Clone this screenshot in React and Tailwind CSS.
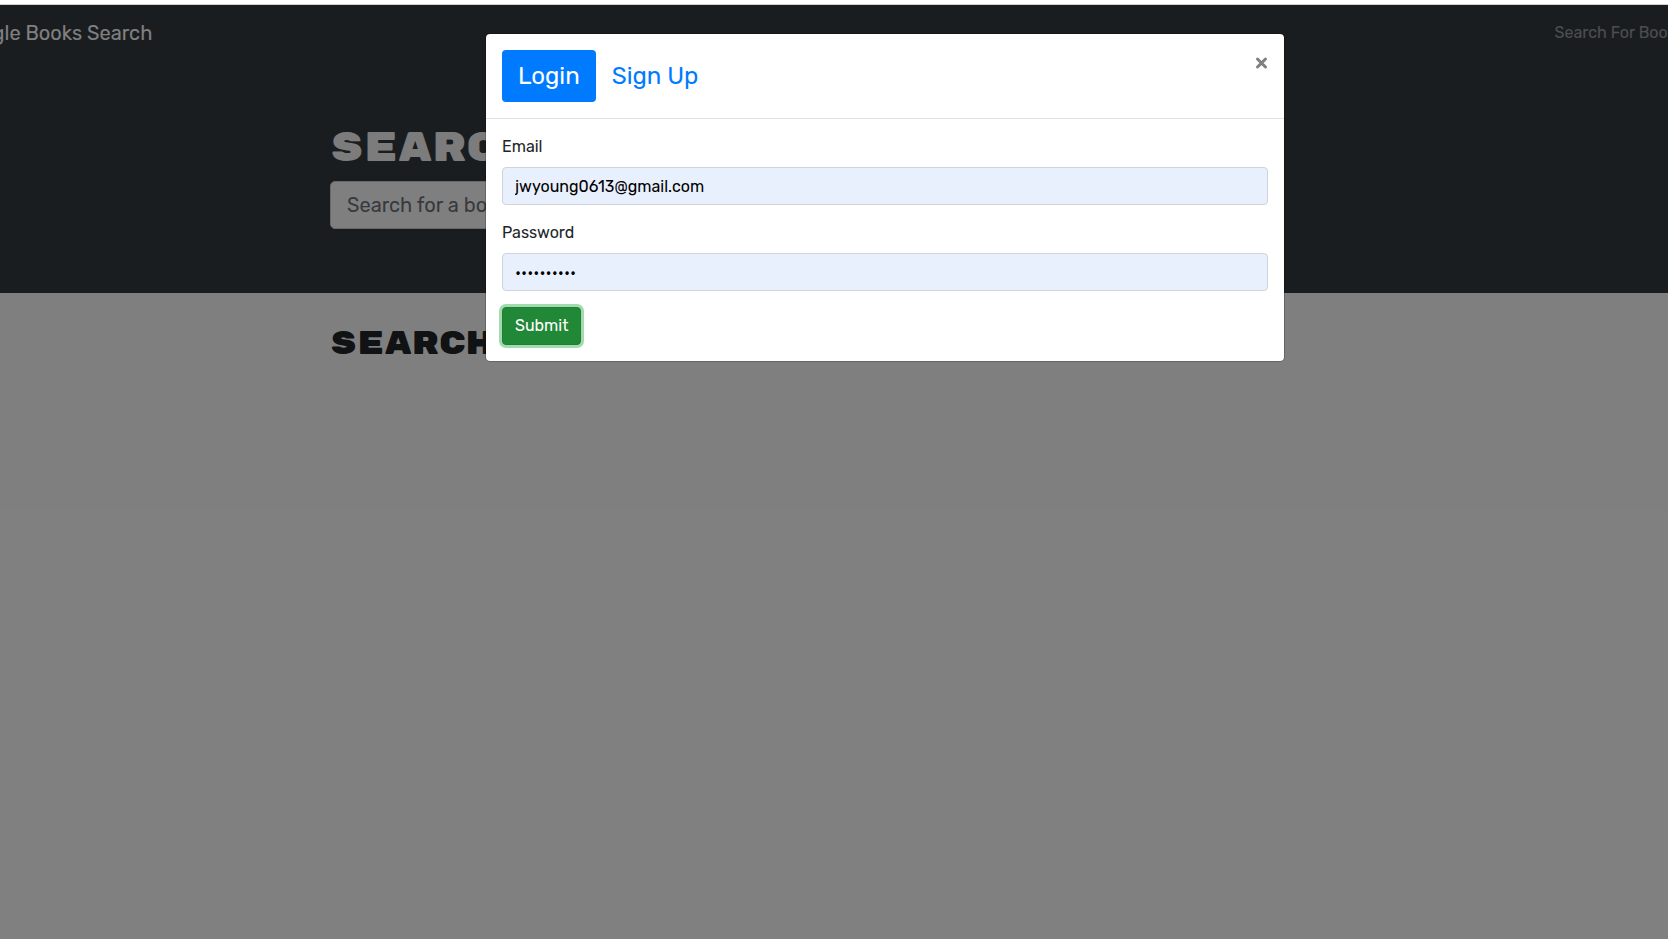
import { useState } from "react";

function Field({ id, label, type, value, onChange }) {
  return (
    <div className="mb-4 flex flex-col gap-2">
      <label htmlFor={id} className="self-start text-[#212529]">
        {label}
      </label>
      <input
        id={id}
        type={type}
        value={value}
        onChange={(e) => onChange(e.target.value)}
        className="h-[38px] w-full rounded border border-[#ced4da] bg-[#e8f0fe] px-3 text-black outline-none"
      />
    </div>
  );
}

function LoginModal() {
  const [email, setEmail] = useState("jwyoung0613@gmail.com");
  const [password, setPassword] = useState("password12");

  return (
    <div
      role="dialog"
      aria-modal="true"
      aria-label="Login"
      className="w-full max-w-[800px] rounded-[5px] border border-black/20 bg-white bg-clip-padding"
    >
      <div className="flex items-start justify-between border-b border-[#dee2e6] p-4">
        <div className="flex text-2xl leading-9">
          <button type="button" className="rounded bg-[#007bff] px-4 py-2 text-white">
            Login
          </button>
          <button type="button" className="rounded px-4 py-2 text-[#007bff]">
            Sign Up
          </button>
        </div>
        <button type="button" aria-label="Close" className="flex size-6 items-center justify-end pt-0.5 text-[#7f7f7f]">
          <svg viewBox="0 0 14 14" className="size-[14px]" fill="none" stroke="currentColor" strokeWidth="3" strokeLinecap="round">
            <path d="M3.5 3 L11.5 11 M11.5 3 L3.5 11" />
          </svg>
        </button>
      </div>
      <form className="p-4" onSubmit={(e) => e.preventDefault()}>
        <Field id="email" label="Email" type="email" value={email} onChange={setEmail} />
        <Field id="password" label="Password" type="password" value={password} onChange={setPassword} />
        <button
          type="submit"
          className="block h-[38px] rounded border border-[#1e7e34] bg-[#218838] px-3 text-white ring-3 ring-[#a1dbae]"
        >
          Submit
        </button>
      </form>
    </div>
  );
}

export default function App() {
  return (
    <div className="flex min-h-screen flex-col bg-white font-[Rubik,Inter,sans-serif] text-base">
      <div className="h-[5px] border-b border-[#d0d0d0] bg-white" />
      <div className="relative flex-1 overflow-hidden">
        <div className="-mr-[177px] -ml-[75px]">
          <nav className="flex h-14 items-center justify-between bg-[#343a40] pr-[161px] pl-[31px]">
            <a href="#home" className="text-xl whitespace-nowrap text-white">
              Google Books Search
            </a>
            <a href="#search" className="whitespace-nowrap text-white/50">
              Search For Books
            </a>
          </nav>
          <header className="bg-[#343a40] py-16">
            <div className="mx-auto flex max-w-[1110px] flex-col gap-2">
              <h1 className="font-['Rubik_Mono_One',Rubik,sans-serif] text-[40px] leading-[48px] font-normal text-[#f8f9fa]">
                Search for Books!
              </h1>
              <input
                type="text"
                aria-label="Search for a book"
                placeholder="Search for a book"
                className="h-12 w-2/3 rounded-[5px] border border-[#ced4da] bg-white px-4 text-xl placeholder:text-[#6c757d]"
              />
            </div>
          </header>
          <main className="mx-auto max-w-[1110px] pt-8">
            <h2 className="font-['Rubik_Mono_One',Rubik,sans-serif] text-[32px] leading-[38px] font-normal text-[#212529]">
              Search for a book to begin
            </h2>
          </main>
        </div>
        <div className="absolute inset-y-0 -right-[177px] -left-[75px] flex items-start justify-center bg-black/50 pt-7">
          <LoginModal />
        </div>
      </div>
    </div>
  );
}
